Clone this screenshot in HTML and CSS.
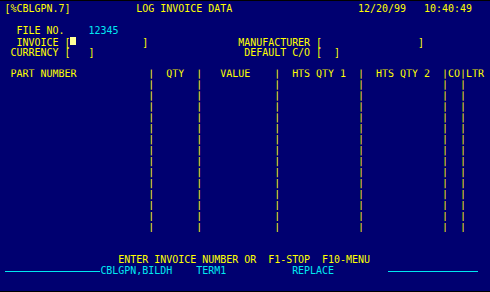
FILE: index.html
```html
<!DOCTYPE html>
<html>
<head>
<meta charset="utf-8">
<link rel="stylesheet" href="styles.css">
</head>
<body>
<div class="screen">
<div class="row">[%CBLGPN.7]           LOG INVOICE DATA                     12/20/99   10:40:49</div>
<div class="row"> </div>
<div class="row">  FILE NO.    <span class="cy">12345</span></div>
<div class="row">  INVOICE [<span class="cursor"></span>           ]               MANUFACTURER [                ]</div>
<div class="row"> CURRENCY [   ]                         DEFAULT C/O [  ]</div>
<div class="row"> </div>
<div class="row grid"> PART NUMBER            |  QTY  |   VALUE    |  HTS QTY 1  |  HTS QTY 2  |CO|LTR</div>
<div class="row grid">                        |       |            |             |             |  |</div>
<div class="row grid">                        |       |            |             |             |  |</div>
<div class="row grid">                        |       |            |             |             |  |</div>
<div class="row grid">                        |       |            |             |             |  |</div>
<div class="row grid">                        |       |            |             |             |  |</div>
<div class="row grid">                        |       |            |             |             |  |</div>
<div class="row grid">                        |       |            |             |             |  |</div>
<div class="row grid">                        |       |            |             |             |  |</div>
<div class="row grid">                        |       |            |             |             |  |</div>
<div class="row grid">                        |       |            |             |             |  |</div>
<div class="row grid">                        |       |            |             |             |  |</div>
<div class="row grid">                        |       |            |             |             |  |</div>
<div class="row grid">                        |       |            |             |             |  |</div>
<div class="row grid">                        |       |            |             |             |  |</div>
<div class="row"> </div>
<div class="row"> </div>
<div class="row">                   ENTER INVOICE NUMBER OR  F1-STOP  F10-MENU</div>
<div class="row cy"><span class="rule rule-left"></span>CBLGPN,BILDH    TERM1           REPLACE         <span class="rule rule-right"></span></div>
</div>
</body>
</html>
```

FILE: styles.css
```css
html, body {
  margin: 0;
  padding: 0;
}
body {
  width: 490px;
  height: 292px;
  box-sizing: border-box;
  background: #000070;
  border-top: 1px solid #000;
  border-bottom: 1px solid #000;
  overflow: hidden;
}
.screen {
  padding: 2.8px 0 0 4.5px;
  font-family: "DejaVu Sans Mono", monospace;
  font-size: 9.967px;
  line-height: 10.95px;
  color: #ffff00;
}
.row {
  white-space: pre;
  height: 10.95px;
}
.grid {
  clip-path: inset(0 0 1.5px 0);
}
.cy {
  color: #00e8f0;
}
.cursor {
  display: inline-block;
  width: 1ch;
  height: 8.7px;
  background: #ffff98;
}
.rule {
  display: inline-block;
  height: 1px;
  background: #00e8f0;
  vertical-align: 2px;
}
.rule-left {
  width: 16ch;
}
.rule-right {
  width: 15ch;
}
```
